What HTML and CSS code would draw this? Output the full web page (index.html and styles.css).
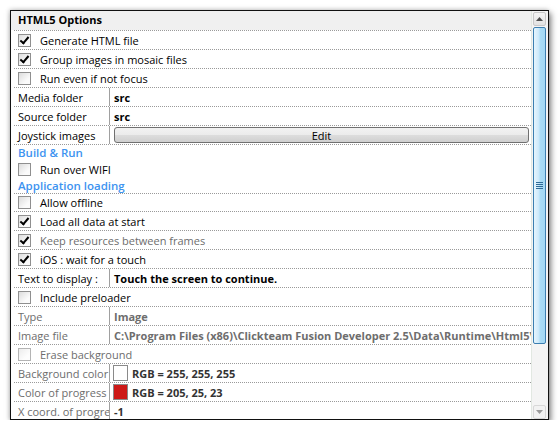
FILE: index.html
```html
<!DOCTYPE html>
<html lang="en">

<head>
  <meta charset="UTF-8" />
  <title>HTML5 Options</title>
  <link rel="stylesheet" href="styles.css">
</head>

<body>
  <div class="panel">
    <div class="grid">
      <div class="title">HTML5 Options</div>

      <div class="row check"><span class="cb on"></span>Generate HTML file</div>
      <div class="row check"><span class="cb on"></span>Group images in mosaic files</div>
      <div class="row check"><span class="cb"></span>Run even if not focus</div>
      <div class="row prop"><span class="label">Media folder</span><span class="value bold">src</span></div>
      <div class="row prop"><span class="label">Source folder</span><span class="value bold">src</span></div>
      <div class="row prop"><span class="label">Joystick images</span><span class="value"><button class="btn">Edit</button></span></div>

      <div class="row section build">Build &amp; Run</div>
      <div class="row check wifi nosep"><span class="cb"></span>Run over WIFI</div>
      <div class="row section nosep">Application loading</div>
      <div class="row check offline"><span class="cb"></span>Allow offline</div>
      <div class="row check"><span class="cb on"></span>Load all data at start</div>
      <div class="row check muted"><span class="cb on"></span>Keep resources between frames</div>
      <div class="row check"><span class="cb on"></span>iOS : wait for a touch</div>
      <div class="row prop"><span class="label">Text to display :</span><span class="value bold">Touch the screen to continue.</span></div>
      <div class="row check"><span class="cb"></span>Include preloader</div>
      <div class="row prop muted"><span class="label">Type</span><span class="value bold">Image</span></div>
      <div class="row prop muted"><span class="label">Image file</span><span class="value bold">C:\Program Files (x86)\Clickteam Fusion Developer 2.5\Data\Runtime\Html5\Preloader.png</span></div>
      <div class="row check muted"><span class="cb off"></span>Erase background</div>
      <div class="row prop muted"><span class="label">Background color</span><span class="value bold dark"><span class="swatch" style="background:#ffffff"></span>RGB = 255, 255, 255</span></div>
      <div class="row prop muted"><span class="label">Color of progress bar</span><span class="value bold dark"><span class="swatch" style="background:#cd1917"></span>RGB = 205, 25, 23</span></div>
      <div class="row prop muted"><span class="label">X coord. of progress bar</span><span class="value bold dark">-1</span></div>
    </div>

    <div class="scrollbar">
      <div class="arrow up"><svg width="7" height="4" viewBox="0 0 7 4"><path d="M0 4 L3.5 0 L7 4 Z" fill="#4d4d4d"/></svg></div>
      <div class="thumb"><span class="grip"></span></div>
      <div class="track"></div>
      <div class="arrow down"><svg width="7" height="4" viewBox="0 0 7 4"><path d="M0 0 L3.5 4 L7 0 Z" fill="#9a9a9a"/></svg></div>
    </div>
  </div>
</body>

</html>
```

FILE: styles.css
```css
body {
  margin: 0;
  background: #fff;
  font-family: "Open Sans", "Noto Sans", sans-serif;
  font-size: 11px;
  color: #000;
}

.panel {
  margin: 10px 0 0 10px;
  width: 537px;
  height: 408px;
  border: 1px solid #111;
  display: flex;
  box-shadow: 2px 3px 6px rgba(0, 0, 0, 0.5), -1px -1px 4px rgba(0, 0, 0, 0.15);
  background: #fff;
  overflow: hidden;
}

.grid {
  width: 521px;
  overflow: hidden;
}

.title {
  height: 19px;
  line-height: 18px;
  background: #f0f0f0;
  font-weight: bold;
  padding-left: 7px;
}

.row {
  height: 18px;
  margin-left: 3px;
  border-top: 1px dotted #9a9a9a;
  display: flex;
  align-items: center;
  white-space: nowrap;
  overflow: hidden;
}

.row.nosep {
  border-top: 1px solid transparent;
}

.check {
  padding-left: 4px;
}

.cb {
  width: 11px;
  height: 11px;
  border: 1px solid #8f8f8f;
  background: linear-gradient(135deg, #dcdcdc, #fbfbfb 70%);
  margin-right: 9px;
  flex: none;
  position: relative;
}

/* tick drawn as a rotated corner */
.cb.on::after {
  content: "";
  position: absolute;
  left: 3px;
  top: 0;
  width: 3px;
  height: 7px;
  border: solid #000;
  border-width: 0 2px 2px 0;
  transform: rotate(40deg);
}

.cb.off {
  border-color: #b4b4b4;
  background: linear-gradient(135deg, #ececec, #fdfdfd 70%);
}

.muted {
  color: #6d6d6d;
}

.section {
  height: 15px;
  padding-left: 4px;
  color: #3d93f0;
  font-weight: 600;
  font-size: 11.5px;
}

.wifi {
  height: 16px;
}

.offline {
  height: 17px;
}

.prop {
  align-items: stretch;
}

.label {
  width: 96px;
  flex: none;
  padding-left: 4px;
  box-sizing: border-box;
  border-right: 1px solid #a0a0a0;
  overflow: hidden;
  display: flex;
  align-items: center;
}

.value {
  padding-left: 4px;
  display: flex;
  align-items: center;
  flex: 1;
  overflow: hidden;
}

.bold {
  font-weight: bold;
}

.dark {
  color: #333;
}

.btn {
  width: 415px;
  height: 16px;
  margin: 0;
  padding: 0;
  font: inherit;
  color: #000;
  border: 1px solid #707070;
  border-radius: 3px;
  background: linear-gradient(#f2f2f2, #ebebeb 50%, #dddddd 51%, #cfcfcf);
}

.swatch {
  width: 13px;
  height: 14px;
  border: 1px solid #8a8a8a;
  margin: 0 4px 0 -1px;
  flex: none;
}

.scrollbar {
  width: 15px;
  border-left: 1px solid #e2e8e2;
  background: #f4f4f4;
  padding: 1px 0 0 1px;
  display: flex;
  flex-direction: column;
}

.arrow {
  height: 14px;
  width: 13px;
  border: 1px solid #c8c8c8;
  border-radius: 2px;
  background: linear-gradient(#f4f4f4, #e2e2e2);
  display: flex;
  align-items: center;
  justify-content: center;
  box-sizing: border-box;
}

.arrow.down {
  background: #f2f2f2;
  border-color: #d8d8d8;
}

.thumb {
  margin-top: 1px;
  height: 317px;
  width: 13px;
  box-sizing: border-box;
  border: 1px solid #3c7fb1;
  border-radius: 2px;
  background: linear-gradient(90deg, #e6f5fd, #cfeafb 40%, #a8dbf5 60%, #a4d8f4);
  display: flex;
  align-items: center;
  justify-content: center;
}

.grip {
  width: 7px;
  height: 7px;
  background: repeating-linear-gradient(#2f6b97 0 1px, transparent 1px 2px);
}

.track {
  flex: 1;
}
```
